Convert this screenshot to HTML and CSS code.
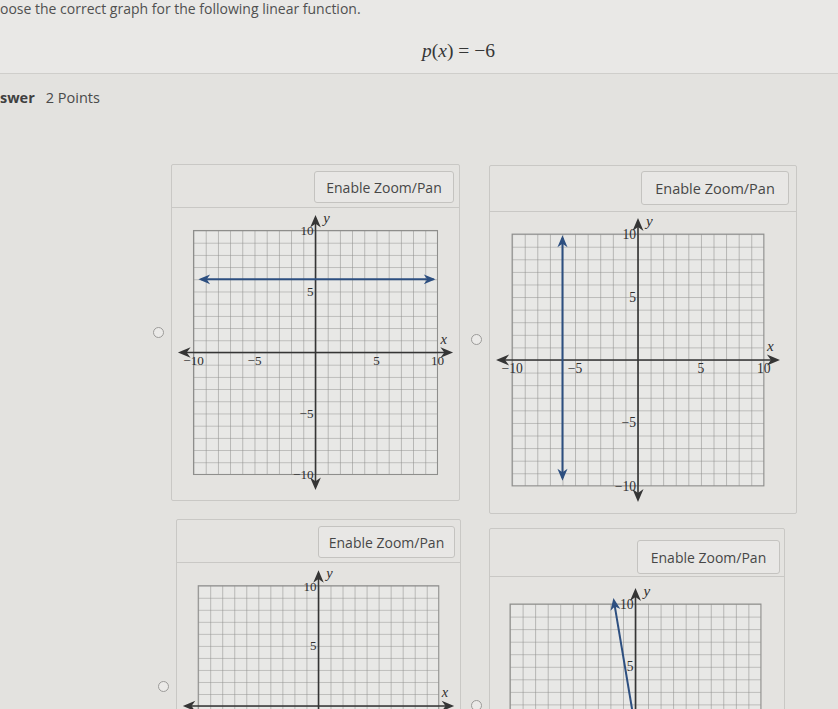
FILE: index.html
```html
<!DOCTYPE html>
<html lang="en">
<head>
<meta charset="utf-8">
<title>Choose the correct graph</title>
<link rel="stylesheet" href="styles.css">
</head>
<body>
<div class="page">
  <section class="question">
    <p class="prompt">oose the correct graph for the following linear function.</p>
    <p class="formula"><i>p</i>(<i>x</i>) = −6</p>
  </section>
  <div class="answer"><span class="answer-label">swer</span><span class="points">2 Points</span></div>

  <div class="options">
    <div class="col col--left">
      <div class="option">
        <span class="radio"></span>
        <div class="card card--a">
          <div class="card-head"><button class="zoom-btn">Enable Zoom/Pan</button></div>
          <div class="card-body">
            <svg class="graph graph--a" viewBox="0 0 290 290">
              <use href="#plane" width="290" height="290"/>
              <g fill="#2d4f80" stroke="#2d4f80">
                <line x1="28" y1="70" x2="266" y2="70" stroke-width="2"/>
                <path d="M0 0 L-12 -5 L-8.5 0 L-12 5 Z" transform="translate(268 70)" stroke="none"/>
                <path d="M0 0 L-12 -5 L-8.5 0 L-12 5 Z" transform="translate(25 70) rotate(180)" stroke="none"/>
              </g>
            </svg>
          </div>
        </div>
      </div>
      <div class="option option--shift">
        <span class="radio"></span>
        <div class="card card--c">
          <div class="card-head"><button class="zoom-btn">Enable Zoom/Pan</button></div>
          <div class="card-body">
            <svg class="graph graph--c" viewBox="0 0 290 290">
              <use href="#plane" width="290" height="290"/>
              <g fill="#2d4f80" stroke="#2d4f80">
                <line x1="28" y1="220" x2="266" y2="220" stroke-width="2"/>
                <path d="M0 0 L-12 -5 L-8.5 0 L-12 5 Z" transform="translate(268 220)" stroke="none"/>
                <path d="M0 0 L-12 -5 L-8.5 0 L-12 5 Z" transform="translate(25 220) rotate(180)" stroke="none"/>
              </g>
            </svg>
          </div>
        </div>
      </div>
    </div>

    <div class="col col--right">
      <div class="option">
        <span class="radio"></span>
        <div class="card card--b">
          <div class="card-head"><button class="zoom-btn">Enable Zoom/Pan</button></div>
          <div class="card-body">
            <svg class="graph graph--b" viewBox="0 0 290 290">
              <use href="#plane" width="290" height="290"/>
              <g fill="#2d4f80" stroke="#2d4f80">
                <line x1="70" y1="24" x2="70" y2="262" stroke-width="2"/>
                <path d="M0 0 L-12 -5 L-8.5 0 L-12 5 Z" transform="translate(70 21) rotate(-90)" stroke="none"/>
                <path d="M0 0 L-12 -5 L-8.5 0 L-12 5 Z" transform="translate(70 265) rotate(90)" stroke="none"/>
              </g>
            </svg>
          </div>
        </div>
      </div>
      <div class="option">
        <span class="radio"></span>
        <div class="card card--d">
          <div class="card-head"><button class="zoom-btn">Enable Zoom/Pan</button></div>
          <div class="card-body">
            <svg class="graph graph--d" viewBox="0 0 290 290">
              <use href="#plane" width="290" height="290"/>
              <g fill="#2d4f80" stroke="#2d4f80">
                <line x1="123.5" y1="17" x2="166.5" y2="273" stroke-width="2"/>
                <path d="M0 0 L-12 -5 L-8.5 0 L-12 5 Z" transform="translate(123 14) rotate(-99.5)" stroke="none"/>
                <path d="M0 0 L-12 -5 L-8.5 0 L-12 5 Z" transform="translate(167 276) rotate(80.5)" stroke="none"/>
              </g>
            </svg>
          </div>
        </div>
      </div>
    </div>
  </div>
</div>

<svg class="defs" width="0" height="0" aria-hidden="true">
  <defs>
    <pattern id="cells" x="20" y="20" width="12.5" height="12.5" patternUnits="userSpaceOnUse">
      <rect width="12.5" height="12.5" fill="#e8e8e6"/>
      <path d="M0 0 V12.5 M0 0 H12.5" stroke="#8e8e8c" stroke-width="1.1" fill="none"/>
    </pattern>
    <path id="head" d="M0 0 L-13 -5.5 L-9 0 L-13 5.5 Z"/>
    <symbol id="plane" viewBox="0 0 290 290">
      <rect x="20" y="20" width="250" height="250" fill="url(#cells)" stroke="#8e8e8c" stroke-width="1.1"/>
      <g stroke="#353535" stroke-width="1.6">
        <line x1="8" y1="145" x2="280" y2="145"/>
        <line x1="145" y1="8" x2="145" y2="280"/>
      </g>
      <g fill="#353535">
        <use href="#head" transform="translate(286 145)"/>
        <use href="#head" transform="translate(4 145) rotate(180)"/>
        <use href="#head" transform="translate(145 4) rotate(-90)"/>
        <use href="#head" transform="translate(145 286) rotate(90)"/>
      </g>
      <g font-family="Liberation Serif, serif" font-size="13.5" fill="#2f2f2f">
        <text x="143" y="25" text-anchor="end">10</text>
        <text x="143" y="87" text-anchor="end">5</text>
        <text x="143" y="212" text-anchor="end">−5</text>
        <text x="143" y="275" text-anchor="end">−10</text>
        <text x="20" y="158" text-anchor="middle">−10</text>
        <text x="82.5" y="158" text-anchor="middle">−5</text>
        <text x="207.5" y="158" text-anchor="middle">5</text>
        <text x="270" y="158" text-anchor="middle">10</text>
        <text x="273" y="136" font-style="italic" font-size="15">x</text>
        <text x="153" y="12" font-style="italic" font-size="15">y</text>
      </g>
    </symbol>
  </defs>
</svg>
</body>
</html>
```

FILE: styles.css
```css
* { box-sizing: border-box; }

html, body {
  margin: 0;
  padding: 0;
}

body {
  background: #e3e2df;
  font-family: "Open Sans", "Liberation Sans", sans-serif;
  color: #4a4a4a;
  overflow: hidden;
}

.page {
  width: 838px;
  height: 709px;
  overflow: hidden;
}

.question {
  height: 74px;
  background: #e9e8e6;
  border-bottom: 1px solid #cfcecb;
  overflow: hidden;
}

.prompt {
  margin: 0;
  font-size: 14px;
  line-height: 17px;
  color: #505050;
  white-space: nowrap;
}

.formula {
  margin: 24px 0 0 422px;
  font-family: "Liberation Serif", serif;
  font-size: 19.5px;
  line-height: 20px;
  color: #363636;
}

.answer {
  margin: 15px 0 0 0;
  font-size: 14.5px;
  line-height: 18px;
  color: #4a4a4a;
  white-space: nowrap;
}

.answer-label {
  font-weight: 700;
  color: #3f3f3f;
}

.points {
  margin-left: 11px;
}

.options {
  display: flex;
  margin-top: 57px;
  padding-left: 153px;
  gap: 10px;
}

.col {
  display: flex;
  flex-direction: column;
}

.col--left { gap: 18px; }
.col--right { gap: 14px; padding-top: 1px; }

.option {
  display: flex;
  align-items: center;
  gap: 7px;
}

.option--shift { margin-left: 5px; }

.radio {
  width: 11px;
  height: 11px;
  flex: none;
  border: 1.5px solid #9c9b99;
  border-radius: 50%;
  background: #ebeae8;
}

.card {
  background: #e4e3e0;
  border: 1px solid #c9c8c5;
  border-radius: 2px;
}

.card--a { width: 289px; }
.card--b { width: 308px; }
.card--c { width: 285px; }
.card--d { width: 296px; }

.card-head {
  display: flex;
  justify-content: flex-end;
  padding: 6px 5px 4px;
  border-bottom: 1px solid #c9c8c5;
}

.card--b .card-head { padding: 5px 7px 6px; }
.card--d .card-head { padding: 11px 4px 2px; }

.zoom-btn {
  width: 140px;
  height: 32px;
  padding: 0;
  background: #e8e7e5;
  border: 1px solid #c4c3c0;
  border-radius: 3px;
  font-family: "Open Sans", "Liberation Sans", sans-serif;
  font-size: 14px;
  color: #474747;
}

.card--b .zoom-btn { width: 148px; height: 34px; font-size: 14.5px; }
.card--c .zoom-btn { width: 137px; }
.card--d .zoom-btn { width: 143px; height: 34px; }

.card-body {
  display: flex;
  padding: 3px 2px 6px;
}

.card--b .card-body { padding: 2px 2px 7px; }

.graph { display: block; }

.graph--a { width: 283px; height: 283px; }
.graph--b { width: 292px; height: 292px; }
.graph--c { width: 280px; height: 280px; }
.graph--d { width: 291px; height: 291px; margin-top: 4px; margin-left: -2px; }

.defs {
  display: block;
  width: 0;
  height: 0;
  overflow: hidden;
}
```
